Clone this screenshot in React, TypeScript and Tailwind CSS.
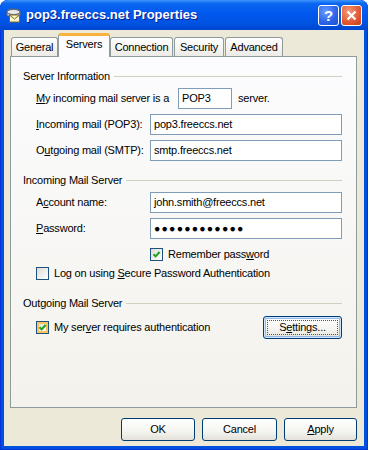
import React from 'react';
import clsx from 'clsx';

const font = { fontFamily: '"Liberation Sans", Arial, sans-serif' };

const Check = ({ checked, hot }: { checked?: boolean; hot?: boolean }) => (
  <span className="relative flex h-[13px] w-[13px] shrink-0 items-center justify-center border border-[#1C5180] bg-[linear-gradient(135deg,#DCDCD7,#FFFFFF)]">
    {hot && <span className="absolute inset-0 border-2 border-[#F9C45B]" />}
    {checked && (
      <svg width="9" height="9" viewBox="0 0 9 9" className="relative">
        <path d="M1.5 4.2 L3.6 6.4 L7.6 2" fill="none" stroke="#21A121" strokeWidth="2" />
      </svg>
    )}
  </span>
);

const TextBox = ({ value, className }: { value: string; className?: string }) => (
  <div
    className={clsx(
      'flex h-[21px] items-center border border-[#7F9DB9] bg-white pl-[3px] text-black',
      className,
    )}
  >
    {value}
  </div>
);

const Group = ({ title }: { title: string }) => (
  <div className="flex h-[13px] items-center">
    <span className="pr-[4px]">{title}</span>
    <div className="h-px flex-1 bg-[#D0D0BF]" />
  </div>
);

const XpButton = ({
  children,
  focused,
  className,
}: {
  children: React.ReactNode;
  focused?: boolean;
  className?: string;
}) => (
  <button
    className={clsx(
      'relative flex h-[23px] items-center justify-center rounded-[3px] border border-[#003C74] bg-[linear-gradient(to_bottom,#FFFFFF_0%,#F4F4F0_60%,#E3E1D8_100%)] text-[11px] tracking-[-0.2px] text-black',
      focused && 'shadow-[inset_0_0_0_1px_#CEE7FF,inset_0_0_0_2px_#98B8EA]',
      className,
    )}
  >
    {focused && <span className="absolute inset-[3px] border border-dotted border-[#555]" />}
    <span className="relative">{children}</span>
  </button>
);

const tabs = [
  { name: 'General', w: 'w-[47px]' },
  { name: 'Servers', w: 'w-[52px]', active: true },
  { name: 'Connection', w: 'w-[63px]' },
  { name: 'Security', w: 'w-[50px] ml-[1px]' },
  { name: 'Advanced', w: 'w-[58px] ml-[1px]' },
];

export default function App() {
  return (
    <div className="h-[450px] w-[379px] bg-white" style={font}>
      <div className="flex h-[450px] w-[368px] flex-col overflow-hidden rounded-t-[8px] bg-[#0050E0] shadow-[inset_0_0_0_1px_#0831D9]">
        {/* title bar */}
        <div className="flex h-[30px] shrink-0 items-center bg-[linear-gradient(to_bottom,#3D95FF_0%,#0A66F0_12%,#0058EE_45%,#0054E3_75%,#0046CF_100%)] pl-[5px] pr-[6px]">
          <svg width="17" height="16" viewBox="0 0 17 16">
            <path d="M2 5 Q2 2 8.5 2 Q15 2 15 5 L15 9 L2 9 Z" fill="#C8CCD2" stroke="#5A6470" />
            <ellipse cx="8.5" cy="5" rx="6.5" ry="2.5" fill="#E8EAEE" stroke="#5A6470" />
            <rect x="4.5" y="8" width="10" height="7" fill="#FFF6C8" stroke="#7A6A30" />
            <path d="M4.5 8 L9.5 12 L14.5 8" fill="none" stroke="#7A6A30" />
          </svg>
          <span className="ml-[4px] text-[13px] font-bold text-white [text-shadow:1px_1px_0_#0A1E8C]">
            pop3.freeccs.net Properties
          </span>
          <div className="ml-auto flex gap-[2px]">
            <div className="flex h-[21px] w-[21px] items-center justify-center rounded-[3px] border border-white bg-[radial-gradient(circle_at_35%_30%,#6A9CFF,#2A62E8_60%,#1C4FD0)] text-[15px] font-bold leading-none text-white">
              ?
            </div>
            <div className="flex h-[21px] w-[21px] items-center justify-center rounded-[3px] border border-white bg-[radial-gradient(circle_at_35%_30%,#F39A7A,#E0582F_60%,#C8401E)]">
              <svg width="11" height="11" viewBox="0 0 11 11">
                <path d="M1.5 1.5 L9.5 9.5 M9.5 1.5 L1.5 9.5" stroke="white" strokeWidth="2.2" />
              </svg>
            </div>
          </div>
        </div>

        {/* body */}
        <div className="mx-[4px] mb-[4px] flex flex-1 flex-col bg-[#ECE9D8] text-[11px] tracking-[-0.2px] text-black">
          <div className="flex h-[26px] items-end pl-[7px] pt-[7px]">
            {tabs.map((t) => (
              <div
                key={t.name}
                className={clsx(
                  'flex items-center justify-center rounded-t-[3px] border border-[#919B9C]',
                  t.w,
                  t.active
                    ? 'relative z-10 -mb-px h-[24px] border-b-0 border-t-[3px] border-t-[#F8B33C] bg-[#FCFCFE] pb-[4px]'
                    : 'h-[19px] border-b-0 bg-[linear-gradient(to_bottom,#FFFFFF,#ECEBE6)] pt-[1px]',
                )}
              >
                {t.name}
              </div>
            ))}
          </div>

          <div className="ml-[6px] flex h-[352px] w-[347px] flex-col border border-[#919B9C] bg-[linear-gradient(to_bottom,#FCFCFE,#F3F2EC)] pl-[12px] pr-[14px] pt-[13px]">
            <Group title="Server Information" />
            <div className="mt-[5px] flex items-center pl-[13px]">
              <span className="w-[142px]">
                <u>M</u>y incoming mail server is a
              </span>
              <TextBox value="POP3" className="w-[54px]" />
              <span className="ml-[6px]">server.</span>
            </div>
            <div className="mt-[5px] flex items-center pl-[13px]">
              <span className="w-[114px]">
                <u>I</u>ncoming mail (POP3):
              </span>
              <TextBox value="pop3.freeccs.net" className="flex-1" />
            </div>
            <div className="mt-[5px] flex items-center pl-[13px]">
              <span className="w-[114px]">
                O<u>u</u>tgoing mail (SMTP):
              </span>
              <TextBox value="smtp.freeccs.net" className="flex-1" />
            </div>

            <div className="mt-[13px]">
              <Group title="Incoming Mail Server" />
            </div>
            <div className="mt-[5px] flex items-center pl-[13px]">
              <span className="w-[114px]">
                A<u>c</u>count name:
              </span>
              <TextBox value="john.smith@freeccs.net" className="flex-1" />
            </div>
            <div className="mt-[5px] flex items-center pl-[13px]">
              <span className="w-[114px]">
                <u>P</u>assword:
              </span>
              <TextBox value="●●●●●●●●●●●●" className="flex-1 text-[10.5px] tracking-[1.2px]" />
            </div>
            <div className="mt-[9px] flex h-[13px] items-center pl-[127px]">
              <Check checked />
              <span className="ml-[5px]">
                Remember pass<u>w</u>ord
              </span>
            </div>
            <div className="mt-[6px] flex h-[13px] items-center pl-[13px]">
              <Check />
              <span className="ml-[5px]">
                Log on using <u>S</u>ecure Password Authentication
              </span>
            </div>

            <div className="mt-[17px]">
              <Group title="Outgoing Mail Server" />
            </div>
            <div className="mt-[6px] flex h-[23px] items-center pl-[13px]">
              <Check checked hot />
              <span className="ml-[5px] flex-1">
                My ser<u>v</u>er requires authentication
              </span>
              <XpButton focused className="w-[79px]">
                S<u>e</u>ttings...
              </XpButton>
            </div>
          </div>

          <div className="mt-[10px] flex justify-end gap-[7px] pr-[7px]">
            <XpButton className="w-[74px]">OK</XpButton>
            <XpButton className="w-[75px]">Cancel</XpButton>
            <XpButton className="w-[73px]">
              <u>A</u>pply
            </XpButton>
          </div>
        </div>
      </div>
    </div>
  );
}
